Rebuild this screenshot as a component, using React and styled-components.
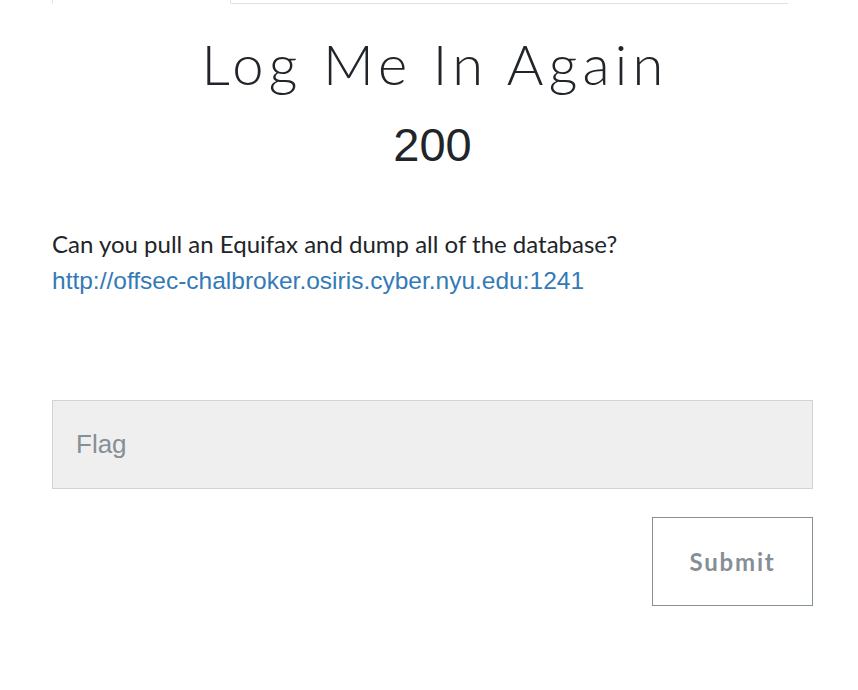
import React from 'react';
import styled, { createGlobalStyle } from 'styled-components';

const GlobalStyle = createGlobalStyle`
    body {
        margin: 0;
        background-color: white;
        font-family: "Lato", "Liberation Sans", sans-serif;
        color: #212529;
    }
`;

const StyledModalBody = styled.div`
    padding: 0 45px 0 52px;
`;

const StyledNav = styled.div`
    display: flex;
    margin-right: 25px;
    border-bottom: 1px solid #dee2e6;
    height: 3px;
`;

const StyledTab = styled.div`
    width: 177px;
    border: 1px solid #dee2e6;
    border-top: none;
    border-bottom: 1px solid ${props => props.active ? 'white' : '#dee2e6'};
    margin-bottom: -1px;
`;

const StyledTitle = styled.h3`
    font-family: "Lato", sans-serif;
    font-weight: 300;
    font-size: 56px;
    line-height: 1.2;
    letter-spacing: 5.2px;
    text-align: center;
    margin: 26px 0 0;
    padding-left: 5px;
`;

const StyledValue = styled.h4`
    font-family: "Liberation Sans", Arial, sans-serif;
    font-weight: 400;
    font-size: 47px;
    line-height: 1.2;
    text-align: center;
    margin: 20px 0 0;
`;

const StyledDescription = styled.p`
    font-family: "Lato", sans-serif;
    font-size: 24px;
    line-height: 36px;
    color: #212529;
    margin: 52px 0 0;
`;

const StyledLink = styled.a`
    font-family: "Liberation Sans", Arial, sans-serif;
    font-size: 24.5px;
    color: #337ab7;
    text-decoration: none;
`;

const StyledForm = styled.form`
    display: flex;
    flex-direction: column;
    align-items: flex-end;
    gap: 28px;
    margin-top: 101px;
`;

const StyledInput = styled.input`
    box-sizing: border-box;
    width: 100%;
    height: 89px;
    padding: 0 23px;
    background-color: #efefef;
    border: 1px solid #ced4da;
    border-radius: 0;
    font-family: "Liberation Sans", Arial, sans-serif;
    font-size: 26px;
    color: #495057;
    outline: none;
    &::placeholder {
        color: #868e96;
    }
`;

const StyledButton = styled.button`
    box-sizing: border-box;
    width: 161px;
    height: 89px;
    background-color: white;
    border: 1px solid #868e96;
    border-radius: 0;
    font-family: "Lato", sans-serif;
    font-weight: 700;
    font-size: 24px;
    letter-spacing: 1.8px;
    color: #868e96;
    &:hover {
        cursor: pointer;
    }
`;

export default function App() {
    return (
        <>
            <GlobalStyle />
            <StyledModalBody>
                <StyledNav>
                    <StyledTab active />
                </StyledNav>
                <StyledTitle>Log Me In Again</StyledTitle>
                <StyledValue>200</StyledValue>
                <StyledDescription>
                    Can you pull an Equifax and dump all of the database?<br />
                    <StyledLink href="#">http://offsec-chalbroker.osiris.cyber.nyu.edu:1241</StyledLink>
                </StyledDescription>
                <StyledForm onSubmit={e => e.preventDefault()}>
                    <StyledInput type="text" placeholder="Flag" />
                    <StyledButton type="submit">Submit</StyledButton>
                </StyledForm>
            </StyledModalBody>
        </>
    );
}
